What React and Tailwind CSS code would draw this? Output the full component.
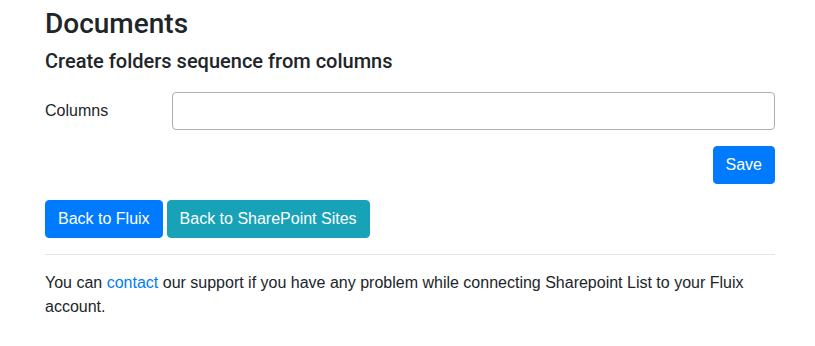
export default function App() {
  return (
    <div
      className="bg-white text-[#212529] pl-[45px] pt-[7px] w-[775px]"
      style={{ fontFamily: '"Liberation Sans", Arial, sans-serif' }}
    >
      <h3 className="text-[28px] leading-[1.2] font-medium mb-[8px] font-['Roboto',sans-serif]">Documents</h3>
      <h5 className="text-[20px] leading-[1.2] font-medium mb-[8px] font-['Roboto',sans-serif]">
        Create folders sequence from columns
      </h5>
      <div className="flex items-center mt-[19px]">
        <label className="w-[127px] text-[16px] leading-[24px]">Columns</label>
        <input
          type="text"
          className="flex-1 h-[38px] border border-[#aeaeae] rounded-[4px] px-3 text-[16px] outline-none"
        />
      </div>
      <div className="flex justify-end mt-[16px]">
        <button className="h-[38px] px-[12px] rounded-[4px] bg-[#007bff] border border-[#007bff] text-white text-[16px] leading-[24px]">
          Save
        </button>
      </div>
      <div className="flex gap-[4px] mt-[16px]">
        <button className="h-[38px] px-[12px] rounded-[4px] bg-[#007bff] border border-[#007bff] text-white text-[16px] leading-[24px]">
          Back to Fluix
        </button>
        <button className="h-[38px] px-[12px] rounded-[4px] bg-[#17a2b8] border border-[#17a2b8] text-white text-[16px] leading-[24px]">
          Back to SharePoint Sites
        </button>
      </div>
      <hr className="mt-[16px] mb-[16px] border-0 border-t border-[#e5e5e5]" />
      <p className="text-[16px] leading-[24px]">
        You can <a className="text-[#007bff]">contact</a> our support if you have any problem while
        connecting Sharepoint List to your Fluix account.
      </p>
    </div>
  );
}
